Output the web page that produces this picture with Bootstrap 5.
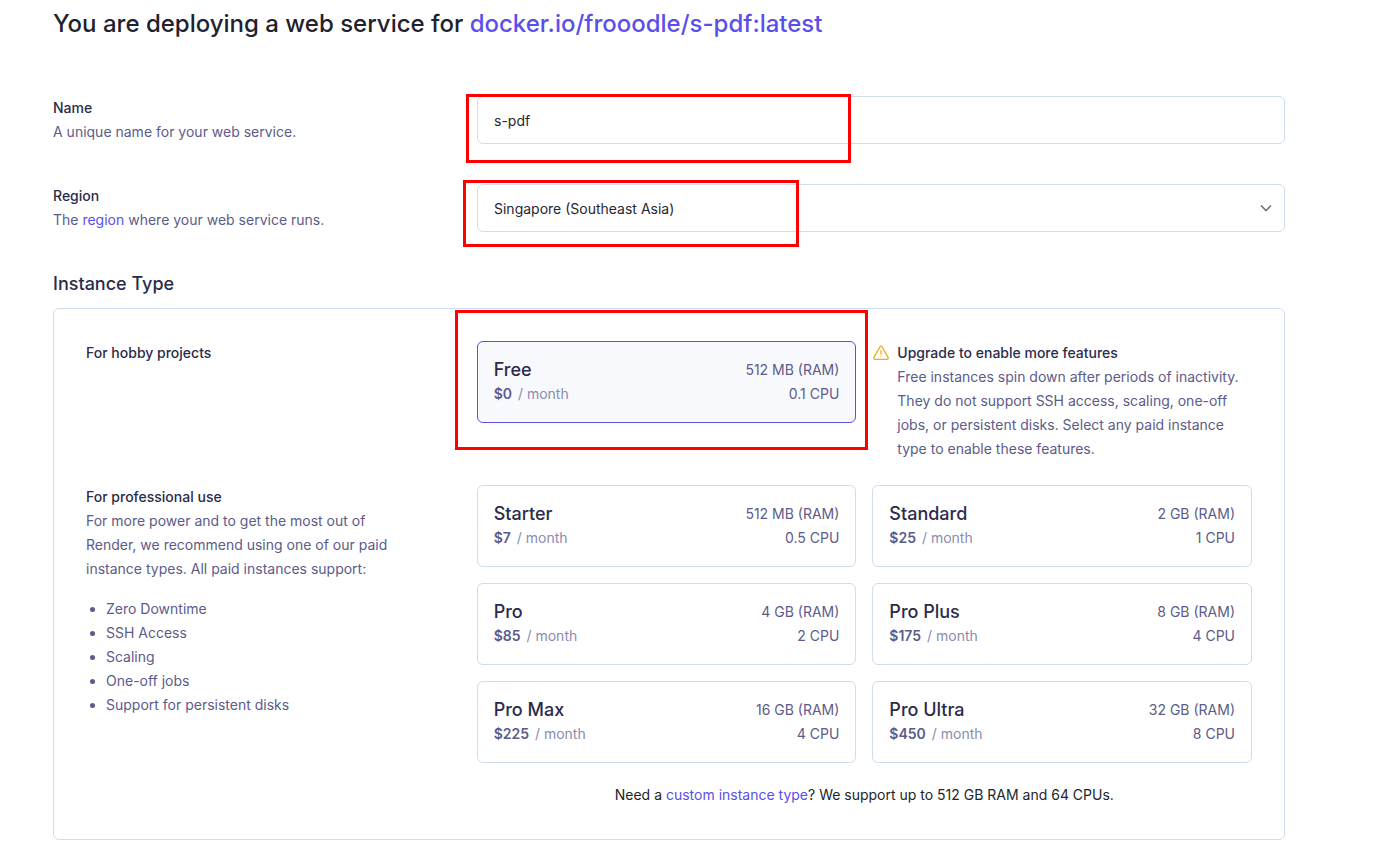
<!DOCTYPE html>
<html lang="en">
<head>
<meta charset="utf-8">
<meta name="viewport" content="width=device-width, initial-scale=1">
<title>Deploy a web service</title>
<link href="https://cdn.jsdelivr.net/npm/bootstrap@5.3.0/dist/css/bootstrap.min.css" rel="stylesheet">
<style>
  :root { --ink: #2b2b4b; --muted-ink: #5c5b8a; --soft-ink: #8b8bb0; --line: #cfdcee; --brand: #5b4feb; }
  body { font-family: Inter, "Liberation Sans", sans-serif; font-size: 14px; line-height: 24px; color: var(--muted-ink); background: #fff; }
  .page { padding: 8px 108px 15px 53px; }
  a { color: var(--brand); text-decoration: none; }
  a:hover { text-decoration: underline; }
  .page-title { font-size: 24px; line-height: 32px; font-weight: 500; color: #1f222e; margin-bottom: 56px; }
  .field-row { display: grid; grid-template-columns: repeat(3, minmax(0, 1fr)); column-gap: 40px; margin-bottom: 40px; }
  .field-row > :last-child { grid-column: span 2; }
  .strong-ink { font-weight: 500; color: var(--ink); font-size: 14px; line-height: 24px; }
  .form-control, .form-select { height: 48px; padding: 0 16px; font-size: 14px; color: #27272f; border-color: var(--line); border-radius: 6px; }
  .form-select { padding-right: 40px; background-size: 16px 16px; background-position: right 10px center;
    background-image: url("data:image/svg+xml,%3Csvg xmlns='http://www.w3.org/2000/svg' viewBox='0 0 16 16'%3E%3Cpath d='M3 5.5l5 5 5-5' fill='none' stroke='%23747687' stroke-width='1.7'/%3E%3C/svg%3E"); }
  .section-title { font-size: 18px; line-height: 24px; font-weight: 500; color: var(--ink); margin-bottom: 12px; }
  .panel { border: 1px solid var(--line); border-radius: 6px; padding: 32px; }
  .plan-row { display: grid; grid-template-columns: calc(100% / 3 - 14px) minmax(0, 1fr); column-gap: 16px; }
  .plan-row + .plan-row { margin-top: 24px; }
  .blurb { max-width: 320px; }
  .plan-grid { display: grid; grid-template-columns: 1fr 1fr; gap: 16px; }
  .plan { display: flex; justify-content: space-between; width: 100%; padding: 16px; border: 1px solid var(--line); border-radius: 6px; cursor: pointer; }
  .btn-check:checked + .plan { border-color: var(--brand); background: #f8f9fd; }
  .plan-name { font-size: 18px; font-weight: 500; color: var(--ink); }
  .plan-price { font-weight: 600; margin-right: 2px; }
  .per { color: var(--soft-ink); }
  .features { padding-left: 20px; margin: 16px 0 0; }
  .note-text { max-width: 344px; }
  .note-icon { flex: none; width: 18px; height: 18px; margin: 3px 7px 0 0; }
  .outline { position: absolute; border: 3px solid #f00; pointer-events: none; z-index: 2; }
  .outline-name { left: -11px; top: -2px; width: 385px; height: 69px; }
  .outline-region { left: -14px; top: -4px; width: 336px; height: 67px; }
  .outline-free { left: -22px; top: -31px; width: 413px; height: 140px; }
</style>
</head>
<body>
<main class="page">
  <h1 class="page-title">You are deploying a web service for <a href="#">docker.io/frooodle/s-pdf:latest</a></h1>
  <form>
    <div class="field-row">
      <div><label class="strong-ink d-block" for="name">Name</label><div>A unique name for your web service.</div></div>
      <div class="position-relative"><input class="form-control" id="name" type="text" value="s-pdf"><span class="outline outline-name"></span></div>
    </div>
    <div class="field-row">
      <div><label class="strong-ink d-block" for="region">Region</label><div>The <a href="#">region</a> where your web service runs.</div></div>
      <div class="position-relative"><select class="form-select" id="region"><option>Singapore (Southeast Asia)</option></select><span class="outline outline-region"></span></div>
    </div>
    <h2 class="section-title">Instance Type</h2>
    <section class="panel">
      <div class="plan-row">
        <h3 class="strong-ink mb-0">For hobby projects</h3>
        <div class="plan-grid align-items-start">
          <div class="position-relative">
            <input class="btn-check" type="radio" name="plan" id="free" checked>
            <label class="plan" for="free"><span><span class="plan-name d-block">Free</span><span class="plan-price">$0</span> <span class="per">/ month</span></span><span class="text-end">512 MB (RAM)<br>0.1 CPU</span></label>
            <span class="outline outline-free"></span>
          </div>
          <div class="d-flex">
            <svg class="note-icon" viewBox="0 0 18 18" fill="none" stroke="#efab1c" stroke-width="1.3" stroke-linejoin="round" stroke-linecap="round" aria-hidden="true"><path d="M8 2.8 1.9 13.4C1.4 14.3 2 15.3 3 15.3H15C16 15.3 16.6 14.3 16.1 13.4L10 2.8C9.6 2 8.4 2 8 2.8ZM9 6.7V10.2M9 12.4V12.6"/></svg>
            <div class="note-text"><div class="strong-ink">Upgrade to enable more features</div>Free instances spin down after periods of inactivity. They do not support SSH access, scaling, one-off jobs, or persistent disks. Select any paid instance type to enable these features.</div>
          </div>
        </div>
      </div>
      <div class="plan-row">
        <div>
          <h3 class="strong-ink mb-0">For professional use</h3>
          <p class="blurb mb-0">For more power and to get the most out of Render, we recommend using one of our paid instance types. All paid instances support:</p>
          <ul class="features"><li>Zero Downtime</li><li>SSH Access</li><li>Scaling</li><li>One-off jobs</li><li>Support for persistent disks</li></ul>
        </div>
        <div>
          <div class="plan-grid">
            <div><input class="btn-check" type="radio" name="plan" id="starter"><label class="plan" for="starter"><span><span class="plan-name d-block">Starter</span><span class="plan-price">$7</span> <span class="per">/ month</span></span><span class="text-end">512 MB (RAM)<br>0.5 CPU</span></label></div>
            <div><input class="btn-check" type="radio" name="plan" id="standard"><label class="plan" for="standard"><span><span class="plan-name d-block">Standard</span><span class="plan-price">$25</span> <span class="per">/ month</span></span><span class="text-end">2 GB (RAM)<br>1 CPU</span></label></div>
            <div><input class="btn-check" type="radio" name="plan" id="pro"><label class="plan" for="pro"><span><span class="plan-name d-block">Pro</span><span class="plan-price">$85</span> <span class="per">/ month</span></span><span class="text-end">4 GB (RAM)<br>2 CPU</span></label></div>
            <div><input class="btn-check" type="radio" name="plan" id="proplus"><label class="plan" for="proplus"><span><span class="plan-name d-block">Pro Plus</span><span class="plan-price">$175</span> <span class="per">/ month</span></span><span class="text-end">8 GB (RAM)<br>4 CPU</span></label></div>
            <div><input class="btn-check" type="radio" name="plan" id="promax"><label class="plan" for="promax"><span><span class="plan-name d-block">Pro Max</span><span class="plan-price">$225</span> <span class="per">/ month</span></span><span class="text-end">16 GB (RAM)<br>4 CPU</span></label></div>
            <div><input class="btn-check" type="radio" name="plan" id="proultra"><label class="plan" for="proultra"><span><span class="plan-name d-block">Pro Ultra</span><span class="plan-price">$450</span> <span class="per">/ month</span></span><span class="text-end">32 GB (RAM)<br>8 CPU</span></label></div>
          </div>
          <p class="text-center text-dark mt-3 pt-1 mb-0">Need a <a href="#">custom instance type</a>? We support up to 512 GB RAM and 64 CPUs.</p>
        </div>
      </div>
    </section>
  </form>
</main>
<script src="https://cdn.jsdelivr.net/npm/bootstrap@5.3.0/dist/js/bootstrap.bundle.min.js"></script>
</body>
</html>
